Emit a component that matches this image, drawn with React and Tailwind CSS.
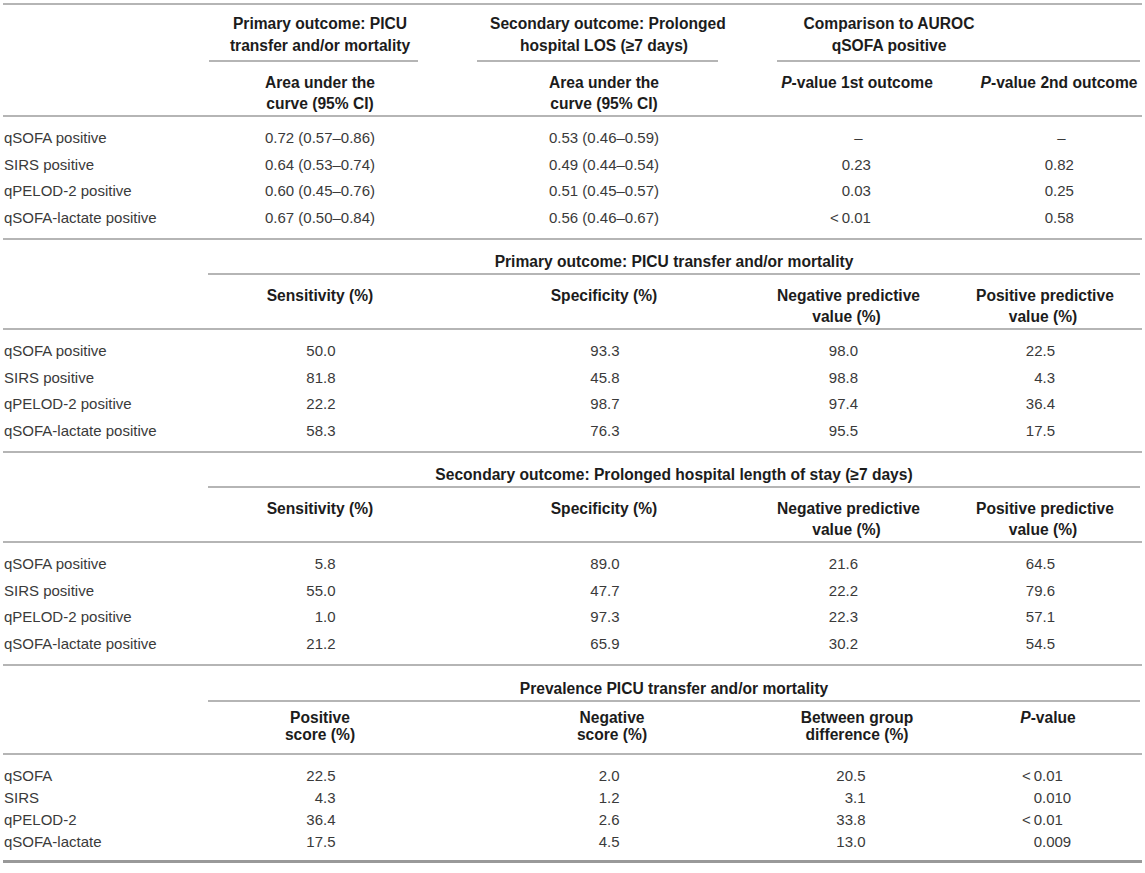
import React from "react";

// shared column grid: label | c1 | c2 | c3 | gap | c4
const COLS = "grid grid-cols-[206px_222px_346px_160px_39px_166px]";
const LINE = "border-[#b5b5b5]";
const HEAD = "font-bold text-[15.6px] text-[#1c1c1c] whitespace-nowrap";

const Num = ({ v, iw, fw, cls = "" }) => {
  let i = "";
  let f = "";
  if (v === "–") {
    f = "\u00a0–";
  } else {
    const k = v.indexOf(".");
    i = v.slice(0, k);
    f = v.slice(k);
  }
  return (
    <div className={`flex justify-center ${cls}`}>
      <span className={`${iw} text-right whitespace-nowrap`}>{i}</span>
      <span className={`${fw} text-left whitespace-nowrap`}>{f}</span>
    </div>
  );
};

const aucRows = [
  ["qSOFA positive", "0.72 (0.57–0.86)", "0.53 (0.46–0.59)", "–", "–"],
  ["SIRS positive", "0.64 (0.53–0.74)", "0.49 (0.44–0.54)", "0.23", "0.82"],
  ["qPELOD-2 positive", "0.60 (0.45–0.76)", "0.51 (0.45–0.57)", "0.03", "0.25"],
  ["qSOFA-lactate positive", "0.67 (0.50–0.84)", "0.56 (0.46–0.67)", "<\u20090.01", "0.58"],
];

const primaryRows = [
  ["qSOFA positive", "50.0", "93.3", "98.0", "22.5"],
  ["SIRS positive", "81.8", "45.8", "98.8", "4.3"],
  ["qPELOD-2 positive", "22.2", "98.7", "97.4", "36.4"],
  ["qSOFA-lactate positive", "58.3", "76.3", "95.5", "17.5"],
];

const secondaryRows = [
  ["qSOFA positive", "5.8", "89.0", "21.6", "64.5"],
  ["SIRS positive", "55.0", "47.7", "22.2", "79.6"],
  ["qPELOD-2 positive", "1.0", "97.3", "22.3", "57.1"],
  ["qSOFA-lactate positive", "21.2", "65.9", "30.2", "54.5"],
];

const prevalenceRows = [
  ["qSOFA", "22.5", "2.0", "20.5", "<\u20090.01"],
  ["SIRS", "4.3", "1.2", "3.1", "0.010"],
  ["qPELOD-2", "36.4", "2.6", "33.8", "<\u20090.01"],
  ["qSOFA-lactate", "17.5", "4.5", "13.0", "0.009"],
];

const PValue = () => (
  <>
    <i>P</i>-value
  </>
);

const Label = ({ children }) => <div className="pl-[1px] whitespace-nowrap">{children}</div>;

function AucSection() {
  return (
    <div className={`border-t-2 ${LINE}`}>
      <div className={`${COLS} ${HEAD} pt-[8px] leading-[22px]`}>
        <div />
        <div className={`mr-[13px] pl-[13px] pb-[3px] border-b-2 ${LINE} text-center`}>
          Primary outcome: PICU
          <br />
          transfer and/or mortality
        </div>
        <div className={`ml-[46px] mr-[59px] pl-[13px] pb-[3px] border-b-2 ${LINE} text-center`}>
          Secondary outcome: Prolonged
          <br />
          hospital LOS (≥7 days)
        </div>
        <div className={`col-span-3 mr-[2px] pr-[139px] pb-[3px] border-b-2 ${LINE} text-center`}>
          Comparison to AUROC
          <br />
          qSOFA positive
        </div>
      </div>
      <div className={`${COLS} ${HEAD} pt-[10px] pb-[1px] border-b-2 ${LINE} leading-[21px]`}>
        <div />
        <div className="text-center">
          Area under the
          <br />
          curve (95% CI)
        </div>
        <div className="text-center">
          Area under the
          <br />
          curve (95% CI)
        </div>
        <div className="text-center">
          <PValue /> 1st outcome
        </div>
        <div className="col-start-6 text-center">
          <PValue /> 2nd outcome
        </div>
      </div>
      <div className="pt-[8px] pb-[7px]">
        {aucRows.map((r) => (
          <div key={r[0]} className={`${COLS} h-[26.5px] items-center`}>
            <Label>{r[0]}</Label>
            <div className="text-center">{r[1]}</div>
            <div className="text-center">{r[2]}</div>
            <Num v={r[3]} iw="w-[22px]" fw="w-[36px]" />
            <Num v={r[4]} iw="w-[22px]" fw="w-[34px]" cls="col-start-6" />
          </div>
        ))}
      </div>
    </div>
  );
}

function RateSection({ title, rows }) {
  return (
    <div className={`border-t-2 ${LINE}`}>
      <div className={`${COLS} ${HEAD} pt-[11px] leading-[22px]`}>
        <div />
        <div className={`col-span-5 -ml-[1px] mr-[2px] border-b-2 ${LINE} text-center`}>{title}</div>
      </div>
      <div className={`${COLS} ${HEAD} pt-[10px] pb-[1px] border-b-2 ${LINE} leading-[21px]`}>
        <div />
        <div className="text-center">Sensitivity (%)</div>
        <div className="text-center">Specificity (%)</div>
        <div className="pr-[21px] text-center">
          Negative predictive
          <br />
          value (%)
        </div>
        <div className="col-start-6 pr-[32px] text-center">
          Positive predictive
          <br />
          value (%)
        </div>
      </div>
      <div className="pt-[8px] pb-[7px]">
        {rows.map((r) => (
          <div key={r[0]} className={`${COLS} h-[26.5px] items-center`}>
            <Label>{r[0]}</Label>
            <Num v={r[1]} iw="w-[20px]" fw="w-[14px]" />
            <Num v={r[2]} iw="w-[20px]" fw="w-[14px]" />
            <Num v={r[3]} iw="w-[20px]" fw="w-[14px]" cls="pr-[29px]" />
            <Num v={r[4]} iw="w-[20px]" fw="w-[14px]" cls="col-start-6 pr-[39px]" />
          </div>
        ))}
      </div>
    </div>
  );
}

function PrevalenceSection() {
  return (
    <div className={`border-t-2 border-b-[3px] ${LINE} border-b-[#999999]`}>
      <div className={`${COLS} ${HEAD} pt-[12px] leading-[22px]`}>
        <div />
        <div className={`col-span-5 -ml-[1px] mr-[2px] border-b-2 ${LINE} text-center`}>
          Prevalence PICU transfer and/or mortality
        </div>
      </div>
      <div className={`${COLS} ${HEAD} pt-[7px] pb-[10px] border-b-2 ${LINE} leading-[17px]`}>
        <div />
        <div className="text-center">
          Positive
          <br />
          score (%)
        </div>
        <div className="pl-[16px] text-center">
          Negative
          <br />
          score (%)
        </div>
        <div className="text-center">
          Between group
          <br />
          difference (%)
        </div>
        <div className="col-start-6 pr-[22px] text-center">
          <PValue />
        </div>
      </div>
      <div className="pt-[10px] pb-[7px]">
        {prevalenceRows.map((r) => (
          <div key={r[0]} className={`${COLS} h-[22px] items-center`}>
            <Label>{r[0]}</Label>
            <Num v={r[1]} iw="w-[20px]" fw="w-[14px]" />
            <Num v={r[2]} iw="w-[20px]" fw="w-[14px]" />
            <Num v={r[3]} iw="w-[20px]" fw="w-[14px]" cls="pr-[14px]" />
            <Num v={r[4]} iw="w-[22px]" fw="w-[34px]" cls="col-start-6 pr-[22px]" />
          </div>
        ))}
      </div>
    </div>
  );
}

export default function App() {
  return (
    <div className="w-[1145px] min-h-[873px] bg-white pt-[3px] px-[3px] font-['Liberation_Sans',Arial,sans-serif] text-[15px] leading-[22px] text-[#3a3a3a]">
      <div className="w-[1139px]">
        <AucSection />
        <RateSection title="Primary outcome: PICU transfer and/or mortality" rows={primaryRows} />
        <RateSection
          title="Secondary outcome: Prolonged hospital length of stay (≥7 days)"
          rows={secondaryRows}
        />
        <PrevalenceSection />
      </div>
    </div>
  );
}
